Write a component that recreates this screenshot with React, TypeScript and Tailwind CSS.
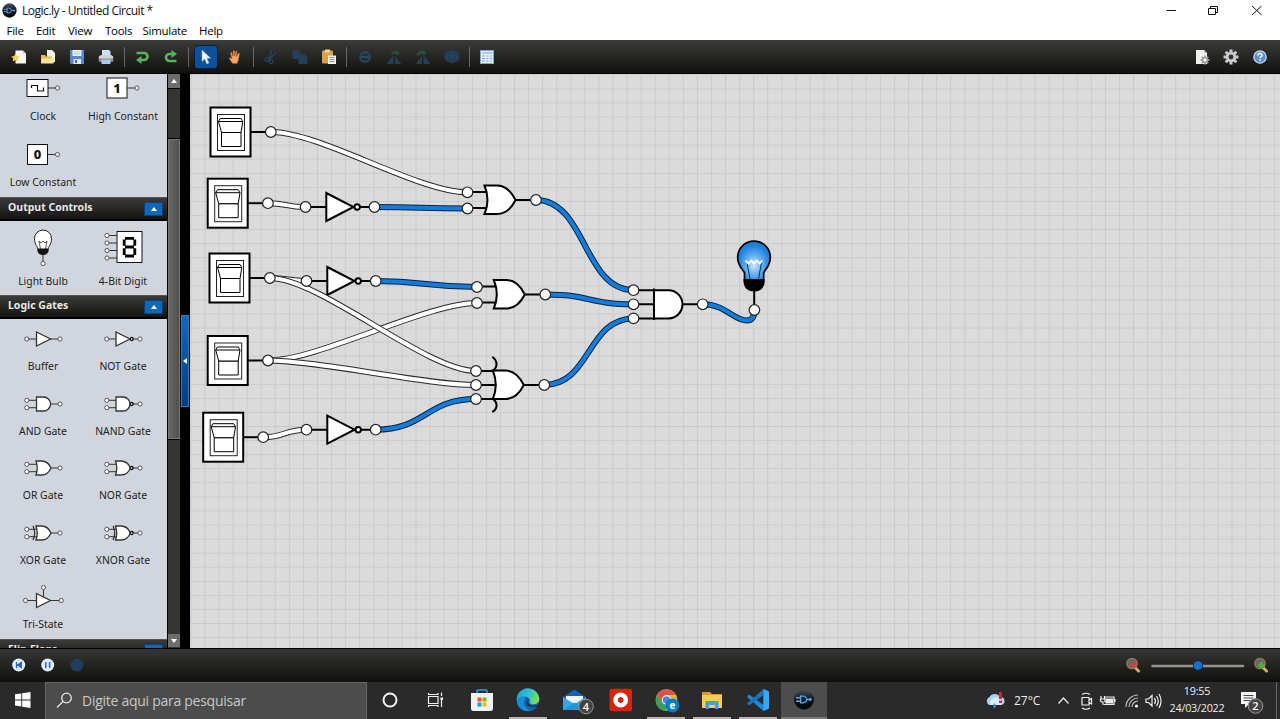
import React from "react";

type Children = { children?: React.ReactNode };

/* ---------- Toolbar ---------- */

function Tool({ children, active, dim }: Children & { active?: boolean; dim?: boolean }) {
  return (
    <div className="flex w-[29.1px] justify-center">
      <div
        className={
          active
            ? "flex h-6 w-6 items-center justify-center rounded-sm border border-[#08223e] bg-[#0d519a]"
            : "flex h-6 w-6 items-center justify-center"
        }
      >
        <svg width="16" height="16" viewBox="0 0 16 16" className={dim ? "shrink-0 opacity-90" : "shrink-0"}>
          {children}
        </svg>
      </div>
    </div>
  );
}

function Sep() {
  return (
    <div className="flex w-[6.4px] justify-center">
      <div className="h-5 w-px bg-[#666]" />
    </div>
  );
}

function GearShape({ x, y, r, fill, hole }: { x: number; y: number; r: number; fill: string; hole: string }) {
  return (
    <g transform={`translate(${x} ${y})`}>
      {[0, 45, 90, 135].map((a) => (
        <rect key={a} x={-r * 0.2} y={-r} width={r * 0.4} height={r * 2} fill={fill} transform={`rotate(${a})`} />
      ))}
      <circle r={r * 0.7} fill={fill} />
      <circle r={r * 0.32} fill={hole} />
    </g>
  );
}

function LogoMark({ size }: { size: number }) {
  return (
    <svg width={size} height={size} viewBox="0 0 22 22" className="shrink-0">
      <defs>
        <linearGradient id="logo" x1="0" y1="0" x2="0" y2="1">
          <stop offset="0" stopColor="#4a5359" />
          <stop offset=".5" stopColor="#101417" />
          <stop offset="1" stopColor="#05080b" />
        </linearGradient>
      </defs>
      <circle cx="11" cy="11" r="10.5" fill="url(#logo)" />
      <path
        d="M2.500 9.200h5M2.500 12.800h5M13.500 11h5M7.500 7.500h2.500a3.800 3.500 0 0 1 0 7H7.500z"
        fill="#10202d"
        stroke="#5ba6e0"
        strokeWidth="1.400"
      />
      <circle cx="17.500" cy="11" r="1.500" fill="#5ba6e0" />
    </svg>
  );
}

function Toolbar() {
  return (
    <div className="flex h-[34px] shrink-0 items-center border-b border-black bg-linear-to-b from-[#3c3c3a] to-[#11110f] pl-[4.500px] pr-[5px] pt-px">
      <Tool>
        <path d="M4.500 1.500h7.500l3 3v10H4.500z" fill="#f7f7f5" />
        <path d="M12 1.500v3h3z" fill="#c5c5c5" />
        <path d="M4.500 4l1.400 3 3 .4-2.200 2.100.6 3.100-2.800-1.600-2.800 1.600.6-3.100L.2 7.400l3-.4z" fill="#f7d252" />
      </Tool>
      <Tool>
        <path d="M7 1h5l3 3v9H7z" fill="#f5f3ea" />
        <path d="M1 6h4l1 1.500h6V14H1z" fill="#e6b85a" />
        <path d="M1 14.500L2 9.500h12.500l-1 5z" fill="#fbe39a" />
      </Tool>
      <Tool>
        <path d="M1 1h14v14H2l-1-1z" fill="#5788cd" />
        <path d="M3.500 1h9v6h-9z" fill="#f1f4f8" />
        <path d="M4.500 3h7M4.500 5h7" stroke="#b9c4d4" />
        <path d="M4.500 10h7.500v5H4.500z" fill="#dfe8f4" />
        <path d="M6 11h2v3H6z" fill="#3c66a8" />
      </Tool>
      <Tool>
        <path d="M4 1h7l1.500 1.500V8H4z" fill="#cfe2f7" />
        <path d="M.8 7.500l2-1.500h10.400l2 1.500V12H.8z" fill="#d0d2d5" />
        <path d="M1 9.500h14V13H1z" fill="#84898f" />
        <path d="M3.500 10.500h9v4.500h-9z" fill="#a9cdf2" />
      </Tool>
      <Sep />
      <Tool>
        <path d="M2.500 4h7.500a3.500 3.500 0 0 1 0 7H6.500" fill="none" stroke="#58b458" strokeWidth="2.600" />
        <path d="M2 11l5.500-4v8z" fill="#58b458" />
      </Tool>
      <Tool>
        <path d="M13.500 12H6.500a3.500 3.500 0 0 1 0-7H9.500" fill="none" stroke="#58b458" strokeWidth="2.600" />
        <path d="M14 5L8.500 1v8z" fill="#58b458" />
      </Tool>
      <Sep />
      <Tool active>
        <path d="M4 1v11.500l2.800-2.600 2 5 2.200-1-2.200-4.700h3.900z" fill="#f4f6f8" stroke="#9aa9b8" strokeWidth=".5" />
      </Tool>
      <Tool>
        <path
          d="M5.500 14.500L2.500 10c-.9-1 .5-1.800 1.300-1l1 .8L3.500 4.300c-.1-1.300 1.200-1.400 1.500-.4l1 3.300V2.500c0-1.300 1.700-1.300 1.700 0V7l.7-4.300c.3-1.200 1.800-.9 1.600.3L9.500 7.500l1.600-3c.6-1.100 1.800-.4 1.400.6l-1.200 6.400-1.300 3z"
          fill="#f0a660"
          stroke="#9a521c"
          strokeWidth=".6"
        />
      </Tool>
      <Sep />
      <Tool dim>
        <path d="M8.500 1L6.500 9.500M13 4L6 10.500" stroke="#244865" strokeWidth="1.700" />
        <circle cx="4" cy="10.500" r="1.900" fill="none" stroke="#244865" strokeWidth="1.400" />
        <circle cx="8" cy="12.500" r="1.900" fill="none" stroke="#244865" strokeWidth="1.400" />
      </Tool>
      <Tool dim>
        <path d="M.5 1h6l2 2v7h-8zM6.500 5h6l3 3v7h-9z" fill="#24435f" />
      </Tool>
      <Tool>
        <rect x="1" y="1.500" width="11" height="13" rx="1" fill="#dfa044" />
        <path d="M4 .5h5v3H4z" fill="#f4d58c" />
        <path d="M7 6.500h8v8.500H7z" fill="#f3f3f3" />
        <path d="M8.500 8.500h5M8.500 10.500h5M8.500 12.500h5" stroke="#8c8c8c" />
      </Tool>
      <Sep />
      <Tool dim>
        <circle cx="8" cy="8" r="6" fill="#284b57" />
        <circle cx="8" cy="8" r="3.800" fill="#1c3040" />
        <path d="M4 8h8" stroke="#33566a" strokeWidth="1.500" />
      </Tool>
      <Tool dim>
        <path d="M.5 15L7.500 6v9zM9 7v8h6.500z" fill="#25445c" />
        <path d="M5 4l5-3 4 3-2.500 2.500L9 4.500 6 6z" fill="#2b5140" />
      </Tool>
      <Tool dim>
        <path d="M.5 15L7 7v8zM8.500 6v9h7z" fill="#25445c" />
        <path d="M1 5l5-4 5 1.500L9.500 6 6 4.500 3.500 7z" fill="#2b5140" />
      </Tool>
      <Tool dim>
        <path d="M8 .7l3 1.500 4 1.600.5 7L8 14.500.7 11 .5 4l4-1.700z" fill="#24435f" />
      </Tool>
      <Sep />
      <Tool>
        <rect x="1.500" y="1.500" width="13" height="13" fill="#e4effc" stroke="#7aa7dd" />
        <path d="M3 4h10" stroke="#9bbfdc" strokeWidth="1.500" />
        <path d="M3 7h3M7.500 7h2M11 7h2M3 9.500h3M7.500 9.500h2M11 9.500h2M3 12h3M7.500 12h2M11 12h2" stroke="#7ca5da" />
      </Tool>
      <div className="flex-1" />
      <Tool>
        <path d="M2 1h8l3 3v11H2z" fill="#f1f1ef" />
        <path d="M10 1v3h3z" fill="#bbb" />
        <GearShape x={11} y={11} r={4.5} fill="#a1a1a1" hole="#fff" />
      </Tool>
      <Tool>
        <GearShape x={8} y={8} r={7.5} fill="#c9c9c9" hole="#333" />
      </Tool>
      <Tool>
        <circle cx="8" cy="8" r="6.200" fill="#5c8fd0" stroke="#c9d9ee" strokeWidth="1.200" />
        <path d="M6 6.500c0-2.700 4-2.700 4-.3 0 1.500-2 1.500-2 3M8 10.300v1.500" fill="none" stroke="#fff" strokeWidth="1.500" />
      </Tool>
    </div>
  );
}

/* ---------- Palette ---------- */

const INK = "#333";

function Dot({ x, y = 0 }: { x: number; y?: number }) {
  return <circle cx={x} cy={y} r="2.100" fill="#fff" stroke="#555" strokeWidth="1" />;
}

type Kind = "buffer" | "not" | "and" | "nand" | "or" | "nor" | "xor" | "xnor" | "tri";

function MiniGate({ kind }: { kind: Kind }) {
  const single = kind === "buffer" || kind === "not" || kind === "tri";
  const inverted = kind === "not" || kind === "nand" || kind === "nor" || kind === "xnor";
  const exclusive = kind === "xor" || kind === "xnor";
  const s = kind === "tri" ? 17.5 : 16.2;
  const body = single
    ? "M-6.500 -7V7L7.500 0z"
    : kind === "and" || kind === "nand"
      ? "M-6.500 -7H0.500A7 7 0 0 1 0.500 7H-6.500z"
      : "M-7 -7H-1.500Q5 -7 8 0Q5 7 -1.500 7H-7Q-4.500 0 -7 -7z";
  return (
    <g>
      <path d={`M7 0H${s}`} stroke={INK} />
      {single ? (
        <path d={`M${-s} 0H-6`} stroke={INK} />
      ) : (
        <path d={`M${-s} -3.700H-6M${-s} 3.700H-6`} stroke={INK} />
      )}
      <g transform={inverted ? "translate(-.5 0)" : undefined}>
        <path d={body} fill="#fff" stroke={INK} strokeWidth="1.300" />
      </g>
      {exclusive && <path d="M-10 -7Q-6.500 0 -10 7" fill="none" stroke={INK} strokeWidth="1.300" />}
      {inverted && <circle cx="8.700" cy="0" r="1.500" fill="#fff" stroke="#111" strokeWidth="1.300" />}
      {kind === "tri" && <path d="M.5 -11V-3.500" stroke={INK} />}
      {kind === "tri" && <Dot x={0.5} y={-13} />}
      {single ? <Dot x={-s} /> : <><Dot x={-s} y={-3.7} /><Dot x={-s} y={3.7} /></>}
      <Dot x={s + 0.8} />
    </g>
  );
}

function ConstBox({ digit }: { digit?: string }) {
  return (
    <g>
      <path d="M4 0h10" stroke={INK} />
      <rect x={digit ? -15.5 : -16} y={digit ? -10 : -8.5} width={digit ? 20 : 21} height={digit ? 20 : 17} fill="#fff" stroke="#111" />
      {digit ? (
        <text x="-5.500" y="4.500" textAnchor="middle" fontFamily="Noto Sans, sans-serif" fontWeight="800" fontSize="13" fill="#111">
          {digit}
        </text>
      ) : (
        <path d="M-11.500 0V-2.500H-5.500V3H.5V-.5" fill="none" stroke="#111" strokeWidth="1.200" />
      )}
      <Dot x={14.500} />
    </g>
  );
}

function MiniBulb() {
  return (
    <g>
      <path d="M0 7V15" stroke={INK} />
      <path d="M-5 4C-5 .5 -8.500 -1 -8.500 -7.500A8.500 8.500 0 0 1 8.500 -7.500C8.500 -1 5 .5 5 4z" fill="#fff" stroke="#222" />
      <path d="M-2.500 3L-4 -5L-2 -3L0 -5L2 -3L4 -5L2.500 3" fill="none" stroke="#333" strokeWidth=".8" />
      <path d="M-5.500 2.500H5.500V5.500Q4 9 0 9Q-4 9 -5.500 5.500z" fill="#111" />
      <Dot x={0} y={17.5} />
    </g>
  );
}

function MiniDigit() {
  return (
    <g>
      {[-11.500, -4, 3.500, 11].map((y) => (
        <g key={y}>
          <path d={`M-16 ${y}H-6`} stroke={INK} />
          <Dot x={-16} y={y} />
        </g>
      ))}
      <rect x="-6" y="-15.500" width="25" height="31" fill="#fff" stroke="#111" />
      <path
        d="M2 -8.700H11M2 0H11M2 9H11M1.200 -7.500V-1.200M11.800 -7.500V-1.200M1.200 1.200V8M11.800 1.200V8"
        stroke="#000"
        strokeWidth="2.800"
      />
    </g>
  );
}

function Cell({ label, box, cy, labelBox, children }: Children & { label: string; box: string; cy: number; labelBox: string }) {
  return (
    <div className="flex w-20 flex-col items-center">
      <div className={box}>
        <svg width="80" height="20" viewBox={`-40 ${-cy} 80 20`} className="overflow-visible">
          {children}
        </svg>
      </div>
      <div className={labelBox}>{label}</div>
    </div>
  );
}

const labelBase = "h-[18px] whitespace-nowrap pl-px text-[10.400px] leading-[18px]";

function SectionHeader({ title }: { title: string }) {
  return (
    <div className="flex h-6 shrink-0 items-center justify-between border-b-2 border-t border-b-black border-t-[#555] bg-linear-to-b from-[#3a3a38] to-[#151513] pl-2 pr-[4px] text-[10.500px] font-bold text-[#e8e8e8]">
      <span className="-mt-px">{title}</span>
      <span className="flex h-[14px] w-[19px] items-center justify-center border border-[#0a4078] bg-[#1268b8]">
        <svg width="6" height="4" viewBox="0 0 6 4">
          <path d="M3 0l3 4H0z" fill="#fff" />
        </svg>
      </span>
    </div>
  );
}

function Palette() {
  const gates: [string, Kind][] = [
    ["Buffer", "buffer"],
    ["NOT Gate", "not"],
    ["AND Gate", "and"],
    ["NAND Gate", "nand"],
    ["OR Gate", "or"],
    ["NOR Gate", "nor"],
    ["XOR Gate", "xor"],
    ["XNOR Gate", "xnor"],
    ["Tri-State", "tri"],
  ];
  return (
    <div className="flex w-[167px] shrink-0 flex-col overflow-hidden bg-[#d1d6de] font-['Noto_Sans',sans-serif] text-[#222]">
      <div className="grid h-[123px] shrink-0 grid-cols-[80px_80px] content-start pl-[2.500px]">
        <Cell label="Clock" box="h-7 pt-1" cy={10} labelBox={labelBase + " mt-[5px]"}>
          <ConstBox />
        </Cell>
        <Cell label="High Constant" box="h-7 pt-1" cy={10} labelBox={labelBase + " mt-[5px]"}>
          <g transform="translate(-.5 0)"><ConstBox digit="1" /></g>
        </Cell>
        <Cell label="Low Constant" box="mt-2.5 h-[38px] pt-[9px]" cy={10} labelBox={labelBase}>
          <g transform="translate(0 .5)"><ConstBox digit="0" /></g>
        </Cell>
      </div>
      <SectionHeader title="Output Controls" />
      <div className="grid h-[74px] shrink-0 grid-cols-[80px_80px] content-start pl-[2.500px]">
        <Cell label="Light Bulb" box="h-[51px] pt-4" cy={10} labelBox={labelBase}>
          <g transform="translate(0 -1)"><MiniBulb /></g>
        </Cell>
        <Cell label="4-Bit Digit" box="h-[51px] pt-4" cy={10} labelBox={labelBase}>
          <MiniDigit />
        </Cell>
      </div>
      <SectionHeader title="Logic Gates" />
      <div className="grid h-[320px] shrink-0 grid-cols-[80px_80px] content-start gap-y-[18.600px] pl-[2.500px] pt-[10px]">
        {gates.map(([label, kind]) => (
          <Cell key={kind} label={label} box="h-5" cy={kind === "tri" ? 13.5 : 10} labelBox={labelBase + " mt-2"}>
            <MiniGate kind={kind} />
          </Cell>
        ))}
      </div>
      <SectionHeader title="Flip-Flops" />
    </div>
  );
}

function ScrollBar() {
  return (
    <div className="flex w-[13px] shrink-0 flex-col border-l border-black bg-[#353532]">
      <div className="flex h-[14px] items-center justify-center bg-[#6d6d6b]">
        <svg width="6" height="4" viewBox="0 0 6 4"><path d="M3 0l3 4H0z" fill="#fff" /></svg>
      </div>
      <div className="h-[51px] border-y border-black" />
      <div className="h-[300px] border border-[#777] bg-linear-to-r from-[#686864] to-[#50504c]" />
      <div className="flex-1 border-t border-black" />
      <div className="mb-px flex h-[13px] items-center justify-center bg-[#6d6d6b]">
        <svg width="6" height="4" viewBox="0 0 6 4"><path d="M3 4l3-4H0z" fill="#fff" /></svg>
      </div>
    </div>
  );
}

/* ---------- Circuit ---------- */

type Pt = [number, number];

function wirePath([x1, y1]: Pt, [x2, y2]: Pt) {
  const c = Math.min(50, (x2 - x1) * 0.52);
  return `M${x1} ${y1}C${x1 + c} ${y1} ${x2 - c} ${y2} ${x2} ${y2}`;
}

function Wire({ from, to, on, d }: { from?: Pt; to?: Pt; on?: boolean; d?: string }) {
  const path = d ?? wirePath(from!, to!);
  return (
    <g fill="none">
      <path d={path} stroke={on ? "#0a2440" : "#2a2a2a"} strokeWidth="6" />
      <path d={path} stroke={on ? "#147ddb" : "#fff"} strokeWidth="4" />
    </g>
  );
}

function Port({ at }: { at: Pt }) {
  return <circle cx={at[0]} cy={at[1]} r="5.300" fill="#fff" stroke="#222" strokeWidth="1.200" />;
}

function ToggleSwitch({ x, y }: { x: number; y: number }) {
  return (
    <g transform={`translate(${x} ${y})`} fill="#fff" stroke="#000">
      <path d="M40 24.500H56" strokeWidth="2" />
      <rect width="40" height="49" strokeWidth="2" />
      <rect x="7" y="7" width="27" height="36" strokeWidth="1" stroke="#222" />
      <path d="M11 25H30.500V39H11z" strokeWidth="1" />
      <path d="M8 14L9.700 11H30.500L32.300 14L30.500 25H11z" strokeWidth="1" />
      <path d="M8 14H32.300" strokeWidth="1" />
    </g>
  );
}

function NotGate({ x, y }: { x: number; y: number }) {
  return (
    <g transform={`translate(${x} ${y})`} fill="#fff" stroke="#000" strokeWidth="2">
      <path d="M0 0H69" />
      <path d="M20.800 -14V14L48 0z" />
      <circle cx="51.700" cy="0" r="2.700" />
    </g>
  );
}

function OrGate({ x, y, wide }: { x: number; y: number; wide?: boolean }) {
  return (
    <g transform={`translate(${x} ${y})`} stroke="#000" strokeWidth="2" fill="none">
      <path d={wide ? "M-68 -14H-48M-68 0H-48M-68 14H-48" : "M-68 -8H-48M-68 8H-48"} />
      <path d="M-22 0H0" />
      <path d="M-51.500 -14.500H-39C-29 -14.500 -24 -7 -20.500 0C-24 7 -29 14 -39 14H-51.500Q-45.500 0 -51.500 -14.500z" fill="#fff" />
      {wide && <path d="M-52 -28.300C-46.500 -24 -46.500 -18 -51 -14.500M-51 14C-46.500 18 -46.500 24 -52 27" />}
    </g>
  );
}

function Circuit() {
  const s1: Pt = [270.8, 132];
  const s2: Pt = [267.9, 203.2];
  const s3: Pt = [269.8, 278];
  const s4: Pt = [268, 360.5];
  const s5: Pt = [263.2, 437.2];
  const n1: Pt = [305.5, 207];
  const n2: Pt = [306.5, 281];
  const n3: Pt = [306.5, 429.7];
  const n1o: Pt = [374.5, 207];
  const n2o: Pt = [375.7, 281];
  const n3o: Pt = [375.7, 429.7];
  const o1a: Pt = [467.5, 192.3];
  const o1b: Pt = [467.5, 208.5];
  const o2a: Pt = [477, 287];
  const o2b: Pt = [477, 303];
  const x3: Pt[] = [[476, 371], [476, 385], [476, 399]];
  const o1: Pt = [536, 200];
  const o2: Pt = [545.3, 294.5];
  const o3: Pt = [544.3, 385];
  const a: Pt[] = [[633.5, 290.2], [633.5, 304.3], [633.5, 318.4]];
  const ao: Pt = [702.7, 304.3];
  const lamp: Pt = [754.4, 310];
  const ports = [s1, s2, s3, s4, s5, n1, n2, n3, n1o, n2o, n3o, o1a, o1b, o2a, o2b, ...x3, o1, o2, o3, ...a, ao, lamp];
  return (
    <svg className="min-w-0 flex-1" height="574" viewBox="190 74 1090 574">
      <defs>
        <pattern id="grid" x="190.400" y="74.300" width="14.070" height="14.070" patternUnits="userSpaceOnUse">
          <path d="M0 .5H14.070M.5 0V14.070" stroke="#cacaca" strokeWidth="1" />
        </pattern>
        <radialGradient id="glow" cx=".5" cy=".6" r=".5">
          <stop offset="0" stopColor="#cfe8ff" />
          <stop offset=".5" stopColor="#62aef2" />
          <stop offset="1" stopColor="#1c80dc" />
        </radialGradient>
      </defs>
      <rect x="190" y="74" width="1090" height="574" fill="#dbdbdb" />
      <rect x="190" y="74" width="1090" height="574" fill="url(#grid)" />

      <ToggleSwitch x={210.5} y={107.500} />
      <ToggleSwitch x={207.7} y={178.700} />
      <ToggleSwitch x={209.5} y={253.500} />
      <ToggleSwitch x={207.7} y={336} />
      <ToggleSwitch x={203.2} y={412.700} />
      <NotGate x={305.5} y={207} />
      <NotGate x={306.5} y={281} />
      <NotGate x={306.5} y={429.700} />
      <OrGate x={536} y={200} />
      <OrGate x={545.3} y={294.500} />
      <OrGate x={544.3} y={385} wide />
      <g stroke="#000" strokeWidth="2" fill="none">
        <path d="M634 290.200H655M634 304.300H655M634 318.400H655M682 304.300H702" />
        <path d="M654 290.200H668.500A14 14.100 0 0 1 668.500 318.400H654z" fill="#fff" />
        <path d="M654 288.500V320" />
      </g>

      <Wire from={s1} to={o1a} />
      <Wire from={s2} to={n1} />
      <Wire from={s3} to={n2} />
      <Wire from={s4} to={o2b} />
      <Wire from={s4} to={x3[1]} />
      <Wire from={s3} to={x3[0]} />
      <Wire from={s5} to={n3} />
      <Wire from={n1o} to={o1b} on />
      <Wire from={n2o} to={o2a} on />
      <Wire from={n3o} to={x3[2]} on />
      <Wire from={o1} to={a[0]} on />
      <Wire from={o2} to={a[1]} on />
      <Wire from={o3} to={a[2]} on />
      <Wire d="M702.700 304.300C726 304.300 733 320.300 747 320.500C752 320.500 754.400 317 754.400 310" on />

      <path d="M754.200 290V308" stroke="#000" strokeWidth="2" />
      <path
        d="M744.500 281V273C744 270 737.700 267 737.700 257.500A16.300 16.300 0 0 1 770.300 257.500C770.300 267 764 270 763.700 273V281z"
        fill="url(#glow)"
        stroke="#000"
        strokeWidth="1.700"
      />
      <path d="M750 279L747 262.500M758.500 279L761.500 262.500" stroke="#0b2f55" strokeWidth="1" fill="none" />
      <path d="M745.500 260.500L748.500 263.500L751.500 260.500L754 263.500L757 260.500L759.500 263.500L762.500 260.500" stroke="#fff" strokeWidth="1.800" fill="none" />
      <path d="M743.600 279H764.600V283Q763 291.500 754 291.500Q745 291.500 743.600 283z" fill="#000" />
      {ports.map((p, i) => (
        <Port key={i} at={p} />
      ))}
    </svg>
  );
}

/* ---------- Simulation bar ---------- */

function Lens({ plus }: { plus?: boolean }) {
  return (
    <svg width="16" height="16" viewBox="0 0 16 16" className="shrink-0">
      <path d="M9.500 10L13.500 14" stroke="#e0a66a" strokeWidth="3" strokeLinecap="round" />
      <circle cx="7" cy="6.500" r="5.200" fill="#66696c" stroke="#a4733e" strokeWidth="1.300" />
      <path d={plus ? "M5 8.500H12M8.500 5V12" : "M5.500 8H12"} stroke={plus ? "#4fae46" : "#e0402f"} strokeWidth="2.600" />
    </svg>
  );
}

function SimulationBar() {
  return (
    <div className="flex h-[34px] shrink-0 items-center border-t border-black bg-linear-to-b from-[#373735] to-[#10100e] pb-[2px] pl-3 pr-[11px]">
      <svg width="80" height="16" viewBox="0 0 80 16">
        <circle cx="6.700" cy="8" r="6.500" fill="#e2edf9" />
        <path d="M4.500 5V11M9.300 5.500V10.500L5.500 8z" stroke="#2967b8" fill="#2967b8" strokeWidth="1.300" />
        <circle cx="35.700" cy="8" r="6.500" fill="#e2edf9" />
        <path d="M33.800 5V11M37.600 5V11" stroke="#3c72b9" strokeWidth="1.700" />
        <circle cx="65" cy="8" r="6.500" fill="#203f5c" />
      </svg>
      <div className="flex-1" />
      <Lens />
      <svg width="112" height="16" viewBox="0 0 112 16">
        <path d="M11.500 9H102" stroke="#96938e" strokeWidth="2.600" strokeLinecap="round" />
        <circle cx="57" cy="8.500" r="4.700" fill="#1673ca" stroke="#092f5c" />
      </svg>
      <Lens plus />
    </div>
  );
}

/* ---------- Taskbar ---------- */

function TaskButton({ children, open, active }: Children & { open?: boolean; active?: boolean }) {
  return (
    <div
      className={
        active
          ? "flex h-full w-[46px] flex-col items-center justify-center bg-[#4d4d4d]"
          : "flex h-full w-[46px] flex-col items-center"
      }
    >
      <div className="flex flex-1 items-center justify-center">
        <svg width="32" height="28" viewBox="-16 -14 32 28" className="overflow-visible">
          {children}
        </svg>
      </div>
      <div className={open ? "h-0.5 w-[38px] bg-[#b8b2b2]" : active ? "h-0.5 w-[46px] bg-[#777]" : "h-0.5"} />
    </div>
  );
}

function Badge({ x, y, n }: { x: number; y: number; n: string }) {
  return (
    <g>
      <circle cx={x} cy={y} r="7.300" fill="#444" stroke="#999" strokeWidth="1" />
      <text x={x} y={y + 4} textAnchor="middle" fontSize="11" fontWeight="600" fill="#fff" fontFamily="Open Sans, sans-serif">
        {n}
      </text>
    </g>
  );
}

function Taskbar() {
  return (
    <div className="flex h-[37px] shrink-0 items-center bg-[#2a2a2a] font-['Open_Sans',sans-serif] text-[#eee]">
      <div className="flex w-[45px] items-center justify-center pb-px">
        <svg width="16" height="16" viewBox="0 0 16 16" fill="#fff">
          <path d="M0 2.300L6.300 1.400V7.500H0zM7.200 1.300L15.500 0V7.500H7.200zM0 8.400H6.300V14.500L0 13.600zM7.200 8.400H15.500V16L7.200 14.700z" />
        </svg>
      </div>
      <div className="flex h-full w-[322px] items-center border border-b-0 border-[#666] bg-[#4c4c4c] pb-0.5 pl-[10px]">
        <svg width="17" height="17" viewBox="0 0 17 17" fill="none" stroke="#e8e8e8" strokeWidth="1.300">
          <circle cx="10.500" cy="6" r="4.800" />
          <path d="M7 9.500L1 15.500" />
        </svg>
        <span className="ml-[9px] whitespace-nowrap text-[14px] tracking-[-0.27px] text-[#c8c8c8]">Digite aqui para pesquisar</span>
      </div>
      <TaskButton><circle r="6.500" fill="none" stroke="#f3f3f3" strokeWidth="2" /></TaskButton>
      <TaskButton>
        <g transform="translate(-1 0)" fill="none" stroke="#eee" strokeWidth="1.200">
          <path d="M-6.500 -3.500H3V3.500H-6.500zM-6.500 -7V-5.500H3V-7M-6.500 7V5.500H3V7M6.500 -7.500V-4M6.500 0V7" />
          <path d="M5.500 -2.500H8V0H5.500z" fill="#fff" stroke="none" />
        </g>
      </TaskButton>
      <TaskButton>
        <path d="M-5 -6V-8.500Q-5 -10 -3.500 -10H3.500Q5 -10 5 -8.500V-6" fill="none" stroke="#29a8e8" strokeWidth="1.500" />
        <path d="M-11 -7H11V8.500Q11 11 8.500 11H-8.500Q-11 11 -11 8.500z" fill="#f1f1f1" />
        <path d="M-4.500 -2.500H-.5V1.500H-4.500z" fill="#f05022" />
        <path d="M.5 -2.500H4.500V1.500H.5z" fill="#7fba00" />
        <path d="M-4.500 2.500H-.5V6.500H-4.500z" fill="#00a4ef" />
        <path d="M.5 2.500H4.500V6.500H.5z" fill="#ffb900" />
      </TaskButton>
      <TaskButton open>
        <defs>
          <linearGradient id="edge" x1="0" y1="0" x2="1" y2=".3">
            <stop offset="0" stopColor="#1aa0dc" />
            <stop offset=".6" stopColor="#35c1c9" />
            <stop offset="1" stopColor="#6fdf58" />
          </linearGradient>
        </defs>
        <circle r="11.300" fill="#1160b0" />
        <path d="M-11.300 0A11.300 11.300 0 0 1 11.300 -1C11.500 3.500 6.500 5 3 4C.5 3 3 2 1.500 -1C-.5 -4.500 -7 -4.500 -11.300 0z" fill="url(#edge)" />
        <path d="M-2 -3C-6.500 2 -3 9 3 10.800C-5 12.500 -11.500 7 -11.300 0C-9 -3 -5 -4 -2 -3z" fill="#188bd6" />
        <path d="M0 -1C-2 4 3 7.500 9.500 5L11.500 3V7L6 6.500Q-1 8 -1.500 2z" fill="#2a2a2a" />
      </TaskButton>
      <TaskButton>
        <g transform="translate(1 0)">
          <path d="M-12 -3L-.5 -10.500L11 -3V10H-12z" fill="#0e64b6" />
          <path d="M-9 -4H8V5H-9z" fill="#f2f6fa" />
          <path d="M-12 -3L-.5 4L11 -3V10H-12z" fill="#31a9e8" />
          <path d="M-12 10L-.5 2.500L11 10z" fill="#2792d8" />
          <Badge x={11} y={6.5} n="4" />
        </g>
      </TaskButton>
      <TaskButton>
        <g transform="translate(.7 0)">
          <rect x="-11.200" y="-11.300" width="22.500" height="22.500" rx="2" fill="#d9230b" />
          <circle r="5.200" fill="none" stroke="#fff" strokeWidth="4.500" />
        </g>
      </TaskButton>
      <TaskButton open>
        <g transform="translate(.5 0)">
          <circle r="10.800" fill="#e3b53c" />
          <path d="M-9.500 -5A10.800 10.800 0 0 1 9.500 -5H0L-4.500 2.500z" fill="#dc5148" />
          <path d="M-9.500 -5A10.800 10.800 0 0 0 -1 10.800L3 3L-5 2z" fill="#35a160" />
          <circle r="4.700" fill="#fff" />
          <circle r="3.800" fill="#4687df" />
          <circle cx="6" cy="5.500" r="7" fill="#0c79c8" />
          <text x="6" y="9" textAnchor="middle" fontSize="10" fontWeight="700" fill="#fff" fontFamily="Open Sans, sans-serif">e</text>
        </g>
      </TaskButton>
      <TaskButton open>
        <path d="M-10 -8H-2L0 -6H10V8H-10z" fill="#d99b20" />
        <path d="M-10 -5H10V8H-10z" fill="#f6cb57" />
        <path d="M-6.500 1H6.500V9H3V5H-3V9H-6.500z" fill="#4b9cd6" />
      </TaskButton>
      <TaskButton open>
        <path d="M5.500 -11L11 -8.500V8.500L5.500 11L-11 -3L-9 -5.500L5.500 5z" fill="#198ad6" />
        <path d="M5.500 -11L-11 3.500L-9 5.500L5.500 -5z" fill="#1675bd" />
        <path d="M5.500 -11L11 -8.500V8.500L5.500 11z" fill="#35a8f2" />
      </TaskButton>
      <TaskButton active>
        <g transform="translate(-10.500 -11)"><LogoMark size={21} /></g>
      </TaskButton>
      <div className="flex-1" />
      <svg width="22" height="20" viewBox="0 0 22 20" className="mr-[8px]">
        <path d="M5 14A4.500 4.500 0 0 1 5.500 6A6 6 0 0 1 16 6A4 4 0 0 1 17 14z" fill="#a9d3f4" />
        <path d="M7 14A3.500 3.500 0 0 1 8 8.500A5 5 0 0 1 16 8A3.500 3.500 0 0 1 17 14z" fill="#dceefb" />
        <path d="M10.500 12Q13 16 10.500 17.500Q8 16 10.500 12" fill="#3389d6" />
        <path d="M16.500 1V8M16.500 9.500V12" stroke="#d42240" strokeWidth="3" />
      </svg>
      <span className="w-[42px] whitespace-nowrap text-[12px]">27°C</span>
      <svg width="110" height="20" viewBox="1056 691 110 20" fill="none" stroke="#eee" strokeWidth="1.200">
        <path d="M1058.500 703.500L1063.500 698L1068.500 703.500" />
        <path d="M1082 697.500H1089V705H1082zM1089 700L1091.500 698.500V704L1089 702.500M1082 694.500Q1086 692 1090 694.500M1082 708Q1086 710.500 1090 708" />
        <path d="M1105 697H1114V704.500H1104M1115 699V702" />
        <path d="M1106 699H1112.500V703H1106z" fill="#eee" />
        <path d="M1101 696V699M1104.500 696V699M1100.500 699H1105V701Q1103 703.500 1100.500 701zM1103 703V705" />
        <path d="M1126 707A12 12 0 0 1 1138 695M1129 707A9 9 0 0 1 1138 698M1132 707A6 6 0 0 1 1138 701" stroke="#bbb" />
        <circle cx="1136.500" cy="706" r="1" fill="#fff" />
        <path d="M1146 699H1148.500L1152 695.500V706L1148.500 702.500H1146zM1154.500 698Q1156.500 701 1154.500 704M1156.500 696Q1160 701 1156.500 706M1159 694Q1163 701 1159 708" />
      </svg>
      <div className="ml-px flex w-[60px] flex-col items-center pb-[3px] text-[10.800px] leading-[17px] tracking-[-0.25px]">
        <span>19:55</span>
        <span>24/03/2022</span>
      </div>
      <svg width="28" height="28" viewBox="0 0 28 28" className="ml-[13px] mr-[8px]">
        <path d="M1 5H16V17H9L5 21V17H1z" fill="#f4f4f4" />
        <path d="M3.500 8.500H13.500M3.500 11H13.500M3.500 13.500H10" stroke="#444" />
        <Badge x={15.500} y={19} n="2" />
      </svg>
      <div className="h-full w-px bg-[#666]" />
      <div className="w-[3px]" />
    </div>
  );
}

/* ---------- Window ---------- */

export default function App() {
  return (
    <div className="flex h-[719px] w-[1280px] flex-col overflow-hidden bg-white">
      <div className="flex h-[21px] shrink-0 items-center pl-0.5 font-['Open_Sans',sans-serif] text-[#111]">
        <LogoMark size={15} />
        <span className="ml-[5px] whitespace-nowrap pt-px text-[12px] tracking-[-0.480px]">Logic.ly - Untitled Circuit *</span>
        <div className="flex-1" />
        <svg width="120" height="20" viewBox="1160 0 120 20" fill="none" stroke="#111" strokeWidth="1">
          <path d="M1166.500 9.500H1176M1208.500 7.500H1215.500V13.500H1208.500zM1210.500 7.500V5.500H1217.500V11.500H1215.500M1252 5L1261.500 14M1261.500 5L1252 14" />
        </svg>
      </div>
      <div className="flex h-[19px] shrink-0 items-center whitespace-nowrap pl-[6.500px] font-['Open_Sans',sans-serif] text-[11.500px] tracking-[-0.280px] text-black">
        <span className="w-[29.500px]">File</span>
        <span className="w-[32px]">Edit</span>
        <span className="w-[37px]">View</span>
        <span className="w-[37.500px]">Tools</span>
        <span className="w-[56.500px]">Simulate</span>
        <span>Help</span>
      </div>
      <Toolbar />
      <div className="flex h-[574px] shrink-0">
        <Palette />
        <ScrollBar />
        <div className="w-[10px] shrink-0 bg-black pl-px pt-[241px]">
          <div className="flex h-[92px] w-2 items-center justify-center border border-[#2d7cc8] bg-linear-to-b from-[#1469b8] to-[#063b7c]">
            <svg width="4" height="6" viewBox="0 0 4 6"><path d="M0 3l4-3v6z" fill="#fff" /></svg>
          </div>
        </div>
        <Circuit />
      </div>
      <SimulationBar />
      <Taskbar />
    </div>
  );
}
